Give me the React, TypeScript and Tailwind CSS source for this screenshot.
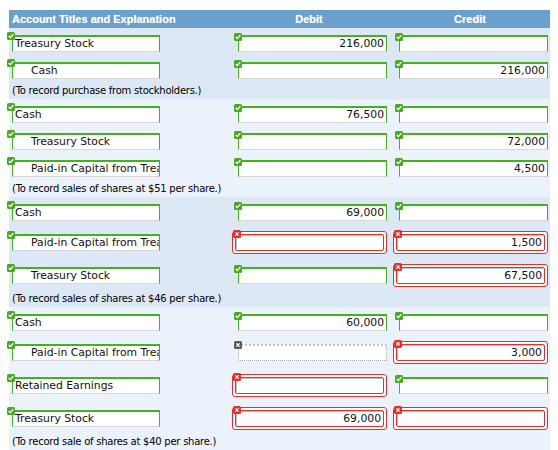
type Status = "ok" | "err" | "na";

interface Cell {
  v: string;
  s: Status;
}

interface Row {
  acct: string;
  indent?: boolean;
  debit: Cell;
  credit: Cell;
}

interface Group {
  rows: Row[];
  note: string;
  light?: boolean;
}

const PAID_IN = "Paid-in Capital from Treasury Stock";

const groups: Group[] = [
  {
    rows: [
      { acct: "Treasury Stock", debit: { v: "216,000", s: "ok" }, credit: { v: "", s: "ok" } },
      { acct: "Cash", indent: true, debit: { v: "", s: "ok" }, credit: { v: "216,000", s: "ok" } },
    ],
    note: "(To record purchase from stockholders.)",
  },
  {
    light: true,
    rows: [
      { acct: "Cash", debit: { v: "76,500", s: "ok" }, credit: { v: "", s: "ok" } },
      { acct: "Treasury Stock", indent: true, debit: { v: "", s: "ok" }, credit: { v: "72,000", s: "ok" } },
      { acct: PAID_IN, indent: true, debit: { v: "", s: "ok" }, credit: { v: "4,500", s: "ok" } },
    ],
    note: "(To record sales of shares at $51 per share.)",
  },
  {
    rows: [
      { acct: "Cash", debit: { v: "69,000", s: "ok" }, credit: { v: "", s: "ok" } },
      { acct: PAID_IN, indent: true, debit: { v: "", s: "err" }, credit: { v: "1,500", s: "err" } },
      { acct: "Treasury Stock", indent: true, debit: { v: "", s: "ok" }, credit: { v: "67,500", s: "err" } },
    ],
    note: "(To record sales of shares at $46 per share.)",
  },
  {
    light: true,
    rows: [
      { acct: "Cash", debit: { v: "60,000", s: "ok" }, credit: { v: "", s: "ok" } },
      { acct: PAID_IN, indent: true, debit: { v: "", s: "na" }, credit: { v: "3,000", s: "err" } },
      { acct: "Retained Earnings", debit: { v: "", s: "err" }, credit: { v: "", s: "ok" } },
      { acct: "Treasury Stock", debit: { v: "69,000", s: "err" }, credit: { v: "", s: "err" } },
    ],
    note: "(To record sale of shares at $40 per share.)",
  },
];

const Mark = ({ s }: { s: Status }) => {
  const fill = s === "ok" ? "#46ab1f" : s === "err" ? "#e8302a" : "#5a5a5a";
  return (
    <svg width="8" height="8" viewBox="0 0 8 8" className="block">
      <rect x="0" y="0" width="8" height="8" rx="1.5" fill={fill} />
      {s === "ok" ? (
        <path d="M1.7 4.1 L3.3 5.6 L6.3 2.3" stroke="#fff" strokeWidth="1.4" fill="none" />
      ) : (
        <path d="M2.4 2.4 L5.6 5.6 M5.6 2.4 L2.4 5.6" stroke="#fff" strokeWidth="1.3" fill="none" />
      )}
    </svg>
  );
};

const txt = "font-['DejaVu_Sans',sans-serif] text-[10.8px] leading-[14px] text-[#111] whitespace-nowrap overflow-hidden";

// green "correct" box: thick top, thin sides, pale bottom
const okBox = "h-[17px] border border-t-2 border-[#d8d8d8] border-t-[#44b21c] border-l-[#44b21c] border-r-[#44b21c] bg-white";

const Field = ({ cell }: { cell: Cell }) => {
  if (cell.s === "err") {
    return (
      <div className="relative ml-[3px] w-[155px] rounded-[3px] border border-[#ee2b25] bg-white p-[2px]">
        <div className="rounded-[2px] border border-[#ee2b25]">
          <div className={`h-[15px] border-t border-l border-[#c4c4c4] pr-[2px] text-right ${txt}`}>{cell.v}</div>
        </div>
        <div className="absolute left-0 -top-[2px]">
          <Mark s="err" />
        </div>
      </div>
    );
  }
  if (cell.s === "na") {
    return (
      <div className="relative ml-[9px] w-[149px]">
        <div className={`h-[17px] border border-dotted border-[#a8a8a8] border-t-2 border-t-[#c4c4c4] bg-white pr-[2px] text-right ${txt}`}>
          {cell.v}
        </div>
        <div className="absolute -left-[4px] -top-[3px]">
          <Mark s="na" />
        </div>
      </div>
    );
  }
  return (
    <div className="relative ml-[9px] w-[149px]">
      <div className={`${okBox} pr-[2px] text-right ${txt}`}>{cell.v}</div>
      <div className="absolute -left-[4px] -top-[2px]">
        <Mark s="ok" />
      </div>
    </div>
  );
};

const AcctField = ({ name, indent }: { name: string; indent?: boolean }) => (
  <div className="relative ml-[3px] w-[148px]">
    <div className={`${okBox} ${indent ? "pl-[18px]" : "pl-[2px]"} ${txt}`}>{name}</div>
    <div className="absolute -left-[5px] -top-[3px]">
      <Mark s="ok" />
    </div>
  </div>
);

export default function App() {
  return (
    <div className="w-[558px] h-[450px] overflow-hidden bg-white pt-[10px] pl-[9px]">
      <div className="w-[541px]">
        <div className="flex h-[18px] items-center bg-[#6b9fcd] font-['Liberation_Sans',sans-serif] text-[11px] font-bold text-white [text-shadow:0_0_1px_rgba(255,255,255,0.5)]">
          <div className="w-[219px] pl-[3px]">Account Titles and Explanation</div>
          <div className="w-[162px] text-center">Debit</div>
          <div className="w-[160px] text-center">Credit</div>
        </div>
        {groups.map((g, gi) => (
          <div key={gi} className={`pt-[2px] pb-[1px] ${g.light ? "bg-[#ebf2fb]" : "bg-[#dde8f6]"}`}>
            {g.rows.map((r, ri) => (
              <div key={ri} className="flex items-center py-[5px]">
                <div className="w-[219px]">
                  <AcctField name={r.acct} indent={r.indent} />
                </div>
                <div className="w-[162px] pl-[1px]">
                  <Field cell={r.debit} />
                </div>
                <div className="w-[160px]">
                  <Field cell={r.credit} />
                </div>
              </div>
            ))}
            <div className="h-[14px] pl-[3px] font-['DejaVu_Sans',sans-serif] text-[10px] leading-[14px] tracking-[-0.25px] text-black">
              {g.note}
            </div>
          </div>
        ))}
      </div>
    </div>
  );
}
